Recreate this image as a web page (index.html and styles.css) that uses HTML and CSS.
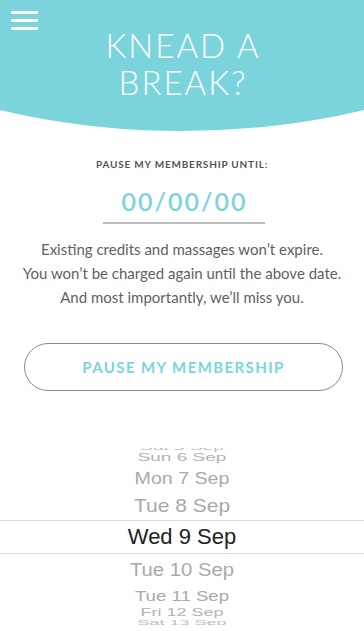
FILE: index.html
```html
<!DOCTYPE html>
<html>
<head>
<meta charset="utf-8">
<link rel="stylesheet" href="styles.css">
</head>
<body>
<div class="screen">
  <header class="hero">
    <div class="menu" aria-label="Menu">
      <span class="menu-line"></span>
      <span class="menu-line"></span>
      <span class="menu-line"></span>
    </div>
    <h1 class="title">KNEAD A<br>BREAK?</h1>
  </header>

  <main class="content">
    <div class="label">PAUSE MY MEMBERSHIP UNTIL:</div>
    <div class="date">00/00/00</div>
    <p class="info">Existing credits and massages won’t expire.<br>You won’t be charged again until the above date.<br>And most importantly, we’ll miss you.</p>
    <button class="pause-btn">PAUSE MY MEMBERSHIP</button>
  </main>

  <div class="picker">
    <div class="row r-sat5"><span>Sat 5 Sep</span></div>
    <div class="row r-sun6"><span>Sun 6 Sep</span></div>
    <div class="row r-mon7"><span>Mon 7 Sep</span></div>
    <div class="row r-tue8"><span>Tue 8 Sep</span></div>
    <div class="row r-sel"><span>Wed 9 Sep</span></div>
    <div class="row r-tue10"><span>Tue 10 Sep</span></div>
    <div class="row r-tue11"><span>Tue 11 Sep</span></div>
    <div class="row r-fri12"><span>Fri 12 Sep</span></div>
    <div class="row r-sat13"><span>Sat 13 Sep</span></div>
  </div>
</div>
</body>
</html>
```

FILE: styles.css
```css
html, body {
  margin: 0;
  padding: 0;
  background: #ffffff;
}

.screen {
  width: 364px;
  height: 631px;
  overflow: hidden;
  display: flex;
  flex-direction: column;
  font-family: "Lato", "Open Sans", sans-serif;
}

.hero {
  height: 131px;
  flex: none;
  background: #7bd4dc;
  clip-path: ellipse(800px 800px at 50% -669px);
  padding: 11px 0 0 0;
  box-sizing: border-box;
  display: flex;
  flex-direction: column;
}

.menu {
  margin-left: 11px;
  width: 27px;
  height: 19px;
  display: flex;
  flex-direction: column;
  justify-content: space-between;
}

.menu-line {
  display: block;
  height: 3px;
  background: #ffffff;
  border-radius: 1px;
}

.title {
  margin: -3px 0 0 0;
  text-align: center;
  color: #ffffff;
  font-family: "Lato", sans-serif;
  font-weight: 300;
  font-size: 33px;
  line-height: 37px;
  letter-spacing: 2px;
  padding-left: 2px;
}

.content {
  display: flex;
  flex-direction: column;
  align-items: center;
}

.label {
  margin-top: 27px;
  font-size: 10px;
  line-height: 12px;
  font-weight: 700;
  letter-spacing: 0.8px;
  color: #555555;
}

.date {
  margin-top: 16px;
  margin-left: 3px;
  width: 162px;
  text-align: center;
  font-size: 25px;
  line-height: 30px;
  font-weight: 600;
  letter-spacing: 2px;
  text-indent: 2px;
  color: #7bd4dc;
  padding-bottom: 6px;
  border-bottom: 2px solid #bdbdbd;
}

.info {
  margin: 13px 0 0 0;
  text-align: center;
  font-size: 15px;
  line-height: 24px;
  color: #5f5f5f;
}

.pause-btn {
  margin: 34px 21px 0 24px;
  align-self: stretch;
  height: 48px;
  border: 1px solid #8a8a8a;
  border-radius: 24px;
  background: #ffffff;
  color: #7bd4dc;
  font-family: "Lato", sans-serif;
  font-weight: 700;
  font-size: 15px;
  letter-spacing: 1.4px;
  padding: 0;
}

.picker {
  margin-top: 57px;
  height: 177px;
  flex: none;
  overflow: hidden;
  display: flex;
  flex-direction: column;
  font-family: "Liberation Sans", Arial, sans-serif;
  color: #a9a9a9;
}

.row {
  flex: none;
  text-align: center;
  white-space: nowrap;
}

.row span {
  display: inline-block;
}

.r-sat5 { height: 3px; line-height: 0px; font-size: 19px; color: #bdbdbd; }
.r-sat5 span { transform: scaleY(0.35); }
.r-sun6 { height: 14px; line-height: 14px; font-size: 19px; color: #b2b2b2; }
.r-sun6 span { transform: scaleY(0.58); }
.r-mon7 { height: 26px; line-height: 26px; font-size: 19.6px; }
.r-mon7 span { transform: scaleY(0.8); }
.r-tue8 { height: 29px; line-height: 29px; font-size: 21px; }
.r-tue8 span { transform: scaleY(0.9); }
.r-sel {
  height: 34px;
  line-height: 32px;
  font-size: 22px;
  color: #222222;
  border-top: 1px solid #dcdcdc;
  border-bottom: 1px solid #dcdcdc;
  box-sizing: border-box;
}
.r-tue10 { height: 30px; line-height: 30px; font-size: 20.3px; }
.r-tue10 span { transform: scaleY(0.95); }
.r-tue11 { height: 24px; line-height: 24px; font-size: 18.6px; }
.r-tue11 span { transform: scaleY(0.8); }
.r-fri12 { height: 10px; line-height: 10px; font-size: 18px; color: #b2b2b2; }
.r-fri12 span { transform: scaleY(0.58); }
.r-sat13 { height: 8px; line-height: 10px; font-size: 18px; color: #bdbdbd; }
.r-sat13 span { transform: scaleY(0.35); }
```
